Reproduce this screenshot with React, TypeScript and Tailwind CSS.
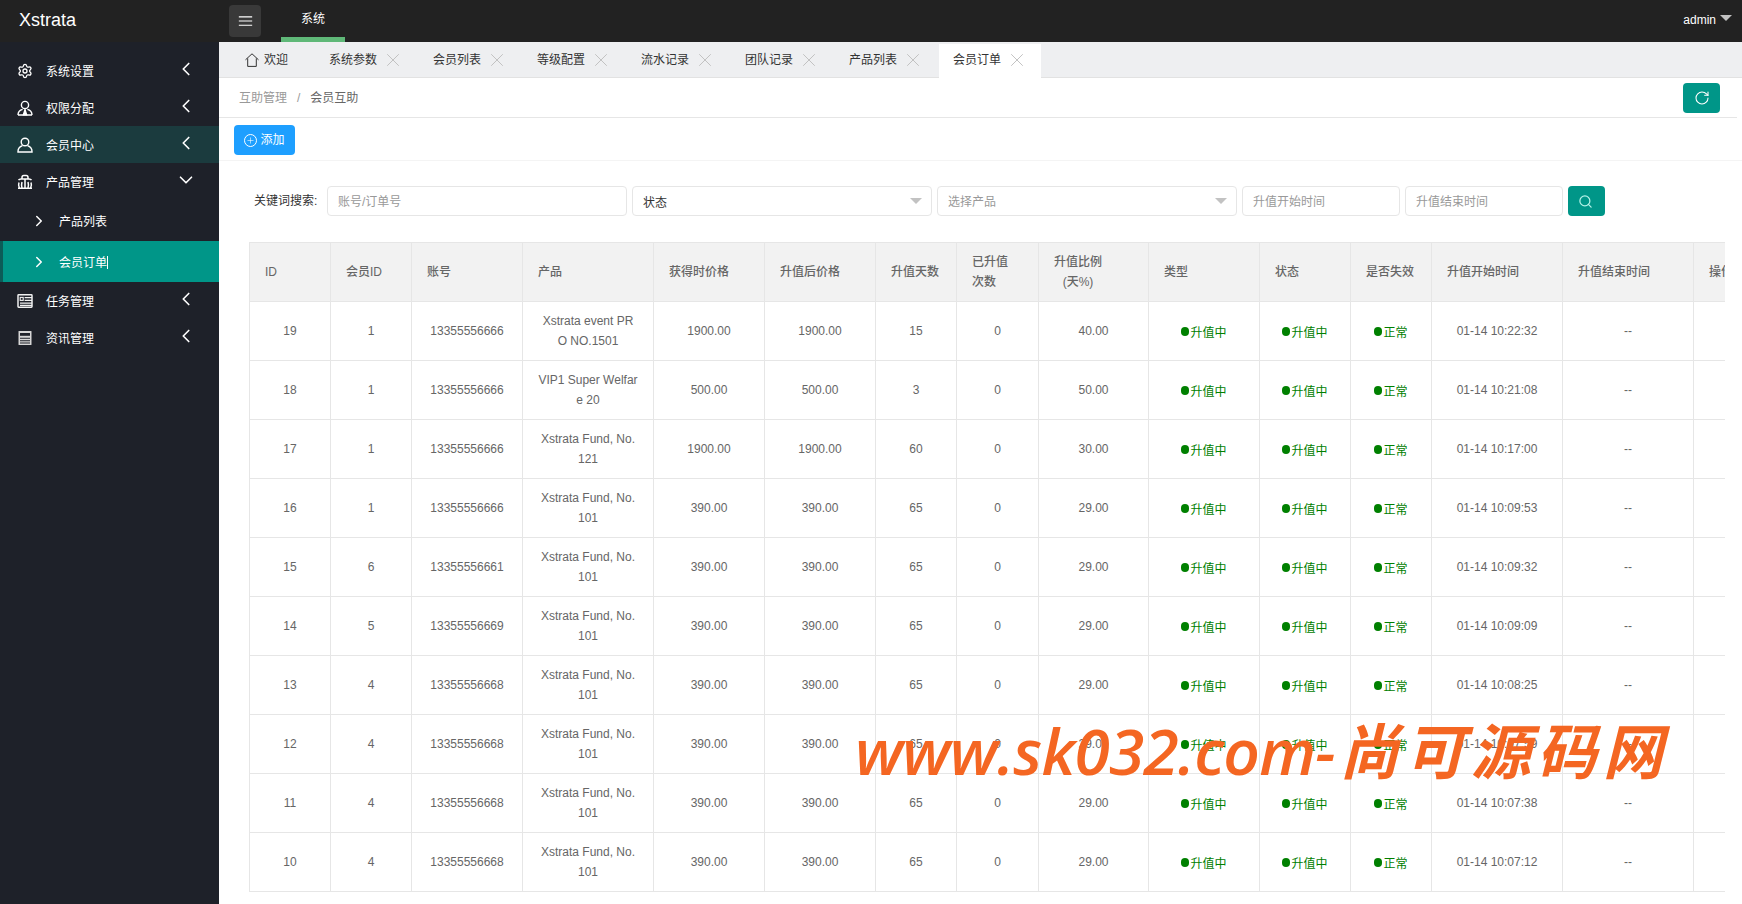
import { ChevronDown, ChevronLeft, ChevronRight, Plus, RotateCw, Search, Settings, X } from "lucide-react";

const font = "font-['Liberation_Sans','Noto_Sans_CJK_SC',sans-serif]";

function IconRole() {
  return (
    <svg viewBox="0 0 16 16" className="size-4" fill="none" stroke="currentColor" strokeWidth="1.4">
      <circle cx="8" cy="5" r="3.6" />
      <path d="M1 15c0-3.6 2.2-5 4.6-5.6M15 15c0-3.6-2.2-5-4.6-5.6M1 15h14" />
      <path d="M8 9.6l-1.6 5.2h3.2z" fill="currentColor" />
    </svg>
  );
}

function IconUser() {
  return (
    <svg viewBox="0 0 16 16" className="size-4" fill="none" stroke="currentColor" strokeWidth="1.4">
      <circle cx="8" cy="5" r="3.8" />
      <path d="M5.4 8.6C2.8 9.6 1 11.6 1 14.4v.6h14v-.6c0-2.8-1.8-4.8-4.4-5.8" />
    </svg>
  );
}

function IconProduct() {
  return (
    <svg viewBox="0 0 16 16" className="size-4" fill="none" stroke="currentColor" strokeWidth="1.5">
      <path d="M5 5V3.4C5 2.4 5.8 1.6 6.8 1.6h2.4c1 0 1.8.8 1.8 1.8V5" />
      <path d="M1.5 6.2C2 5.4 3 5 4 5h8c1 0 2 .4 2.5 1.2" />
      <path d="M8 5v9M2 8.5c-.6 1.5-.6 3.5.4 5.5M14 8.5c.6 1.5.6 3.5-.4 5.5M5 8c-.6 2-.6 4 0 6M11 8c.6 2 .6 4 0 6M1 14.2h14" />
    </svg>
  );
}

function IconTask() {
  return (
    <svg viewBox="0 0 16 16" className="size-4" fill="none" stroke="#f0f0f0" strokeWidth="1.5">
      <rect x="1" y="1.8" width="14" height="12.4" rx="0.6" />
      <rect x="3.2" y="4.4" width="3" height="3" strokeWidth="1.1" />
      <path d="M7.6 4.7H15M7.6 7.4H15M3 10.2h12M3 12.3h12" strokeWidth="1.3" />
    </svg>
  );
}

function IconNews() {
  return (
    <svg viewBox="0 0 16 16" className="size-4" fill="none">
      <rect x="1.5" y="1" width="13" height="14" rx="0.6" fill="#d6d6d6" />
      <rect x="3" y="3" width="10" height="2.8" fill="#1e2129" />
      <path d="M3 8.3h10M3 10.7h10" stroke="#1e2129" strokeWidth="1.1" />
      <path d="M3 13h10" stroke="#1e2129" strokeWidth="1" />
    </svg>
  );
}

function IconHome() {
  return (
    <svg viewBox="0 0 14 14" className="size-[14px]" fill="none" stroke="currentColor" strokeWidth="1">
      <path d="M0.5 6.8L7 0.8l6.5 6M2.7 5.4v8h8.6v-8" />
    </svg>
  );
}

const tabs = ["系统参数", "会员列表", "等级配置", "流水记录", "团队记录", "产品列表"];

const widths = ["w-[81px]", "w-[81px]", "w-[111px]", "w-[131px]", "w-[111px]", "w-[111px]", "w-[81px]", "w-[82px]", "w-[110px]", "w-[111px]", "w-[91px]", "w-[81px]", "w-[131px]", "w-[131px]", "w-[80px]"];

const fund101 = ["Xstrata Fund, No.", "101"];

const rows = [
  { id: 19, uid: 1, phone: "13355556666", name: ["Xstrata event PR", "O NO.1501"], price: "1900.00", after: "1900.00", days: 15, rate: "40.00", time: "01-14 10:22:32" },
  { id: 18, uid: 1, phone: "13355556666", name: ["VIP1 Super Welfar", "e 20"], price: "500.00", after: "500.00", days: 3, rate: "50.00", time: "01-14 10:21:08" },
  { id: 17, uid: 1, phone: "13355556666", name: ["Xstrata Fund, No.", "121"], price: "1900.00", after: "1900.00", days: 60, rate: "30.00", time: "01-14 10:17:00" },
  { id: 16, uid: 1, phone: "13355556666", name: fund101, price: "390.00", after: "390.00", days: 65, rate: "29.00", time: "01-14 10:09:53" },
  { id: 15, uid: 6, phone: "13355556661", name: fund101, price: "390.00", after: "390.00", days: 65, rate: "29.00", time: "01-14 10:09:32" },
  { id: 14, uid: 5, phone: "13355556669", name: fund101, price: "390.00", after: "390.00", days: 65, rate: "29.00", time: "01-14 10:09:09" },
  { id: 13, uid: 4, phone: "13355556668", name: fund101, price: "390.00", after: "390.00", days: 65, rate: "29.00", time: "01-14 10:08:25" },
  { id: 12, uid: 4, phone: "13355556668", name: fund101, price: "390.00", after: "390.00", days: 65, rate: "29.00", time: "01-14 10:07:59" },
  { id: 11, uid: 4, phone: "13355556668", name: fund101, price: "390.00", after: "390.00", days: 65, rate: "29.00", time: "01-14 10:07:38" },
  { id: 10, uid: 4, phone: "13355556668", name: fund101, price: "390.00", after: "390.00", days: 65, rate: "29.00", time: "01-14 10:07:12" },
];

function MenuItem({ icon, label, open, active }: { icon: React.ReactNode; label: string; open?: boolean; active?: boolean }) {
  return (
    <div className={`flex h-[37px] items-center pl-[17px] pr-[22px] text-white ${active ? "bg-[#1b3b3e]" : ""}`}>
      <span className="w-[29px] shrink-0">{icon}</span>
      <span className="flex-1 pt-[3px]">{label}</span>
      {open ? <ChevronDown className="-mt-[3px] size-[22px]" strokeWidth={1.8} /> : <ChevronLeft className="-mt-[3px] size-[22px]" strokeWidth={1.8} />}
    </div>
  );
}

function Status({ text }: { text: string }) {
  return (
    <span className="inline-flex items-center gap-px text-[#008000]">
      <span className="h-[9px] w-2 rounded-full bg-[#008000]" />
      <span className="pt-[3px]">{text}</span>
    </span>
  );
}

function Th({ children }: { children: React.ReactNode }) {
  return <th className="border border-[#e6e6e6] px-[15px] text-left font-medium leading-5 text-[#666]">{children}</th>;
}

function Td({ children }: { children: React.ReactNode }) {
  return <td className="border border-[#e6e6e6] px-[15px] text-center leading-5 text-[#666]">{children}</td>;
}

function Field({ placeholder, width }: { placeholder: string; width: string }) {
  return <div className={`flex h-[30px] items-center rounded-sm border border-[#e6e6e6] pl-[10px] pt-[1px] text-[#999] ${width}`}>{placeholder}</div>;
}

function Select({ label, width, dark }: { label: string; width: string; dark?: boolean }) {
  return (
    <div className={`flex h-[30px] items-center justify-between rounded-sm border border-[#e6e6e6] pl-[10px] pr-[9px] ${width} ${dark ? "text-[#333]" : "text-[#999]"}`}>
      <span className={dark ? "pt-[3px]" : "pt-[1px]"}>{label}</span>
      <span className="border-x-[6px] border-t-[6px] border-x-transparent border-t-[#c2c2c2]" />
    </div>
  );
}

export default function App() {
  return (
    <div className={`relative flex h-screen flex-col overflow-hidden bg-white text-xs ${font}`}>
      <header className="flex h-[42px] shrink-0 items-center bg-[#222222] text-white">
        <div className="-mt-[3px] w-[229px] pl-[19px] text-lg">Xstrata</div>
        <div className="flex size-8 items-center justify-center rounded-sm bg-[#393939]">
          <svg viewBox="0 0 16 12" className="h-[10px] w-[15px]" stroke="currentColor" strokeWidth="1.3">
            <path d="M0 1h16M0 6h16M0 11h16" />
          </svg>
        </div>
        <div className="ml-5 flex h-full w-16 items-center justify-center border-b-[5px] border-[#5fb878] pt-[1px]">系统</div>
        <div className="-mt-[2px] ml-auto flex items-center gap-1 pr-[10px]">
          <span>admin</span>
          <span className="-mt-1 border-x-[6px] border-t-[6px] border-x-transparent border-t-[#c2c2c2]" />
        </div>
      </header>
      <div className="flex min-h-0 flex-1">
        <aside className="w-[219px] shrink-0 bg-[#1e2129] pt-[10px]">
          <MenuItem icon={<Settings className="size-4" strokeWidth={2} />} label="系统设置" />
          <MenuItem icon={<IconRole />} label="权限分配" />
          <MenuItem icon={<IconUser />} label="会员中心" active />
          <MenuItem icon={<IconProduct />} label="产品管理" open />
          <div className="flex h-[41px] items-center pl-[30px] text-white">
            <ChevronRight className="size-[18px]" strokeWidth={2} />
            <span className="ml-[11px] pt-[2px]">产品列表</span>
          </div>
          <div className="flex h-[41px] items-center border-l-[3px] border-[#0c5c58] bg-[#009688] pl-[27px] text-white">
            <ChevronRight className="size-[18px]" strokeWidth={2} />
            <span className="ml-[11px] pt-[2px]">会员订单</span>
            <span className="mt-[1px] h-[13px] w-px bg-white" />
          </div>
          <MenuItem icon={<IconTask />} label="任务管理" />
          <MenuItem icon={<IconNews />} label="资讯管理" />
        </aside>
        <main className="min-w-0 flex-1">
          <div className="flex h-[36px] border-b border-[#e2e2e2] bg-[#eeeff1] text-[#333]">
            <div className="flex w-[96px] items-center pl-[26px]">
              <IconHome />
              <span className="ml-[5px]">欢迎</span>
            </div>
            {tabs.map((tab) => (
              <div key={tab} className="flex w-[104px] items-center pl-[14px]">
                <span>{tab}</span>
                <X className="ml-[5px] size-[22px] text-[#bdbdbd]" strokeWidth={1} />
              </div>
            ))}
            <div className="mt-[2px] flex h-[35px] w-[102px] items-center bg-white pb-[3px] pl-[14px]">
              <span>会员订单</span>
              <X className="ml-[5px] size-[22px] text-[#bdbdbd]" strokeWidth={1} />
            </div>
          </div>
          <div className="mr-[5px] flex h-[40px] items-center justify-between border-b border-[#e6e6e6] pl-5 pr-[17px]">
            <div className="flex items-center">
              <span className="text-[#999]">互助管理</span>
              <span className="mx-[10px] text-[#999]">/</span>
              <span className="text-[#666]">会员互助</span>
            </div>
            <div className="flex h-[30px] w-[37px] items-center justify-center rounded-sm bg-[#009688] text-white">
              <RotateCw className="size-4" strokeWidth={1.6} />
            </div>
          </div>
          <div className="flex h-[43px] items-start border-b border-[#f4f4f4] pl-[15px] pt-[7px]">
            <div className="flex h-[30px] w-[61px] items-center justify-center gap-[3px] rounded-sm bg-[#1e9fff] text-white">
              <span className="flex size-[13px] items-center justify-center rounded-full border border-white">
                <Plus className="size-[9px]" strokeWidth={1.5} />
              </span>
              <span>添加</span>
            </div>
          </div>
          <div className="flex items-center gap-[5px] pl-[35px] pt-[25px]">
            <span className="w-[68px] whitespace-nowrap text-[#333]">关键词搜索:</span>
            <Field placeholder="账号/订单号" width="w-[300px]" />
            <Select label="状态" width="w-[300px]" dark />
            <Select label="选择产品" width="w-[300px]" />
            <Field placeholder="升值开始时间" width="w-[158px]" />
            <Field placeholder="升值结束时间" width="w-[158px]" />
            <div className="flex h-[30px] w-[37px] items-center justify-center rounded-sm bg-[#009688] text-[#b5f2e8]">
              <Search className="-ml-[2px] size-[15px]" strokeWidth={2} />
            </div>
          </div>
          <div className="ml-[30px] mt-[26px] w-[1476px] overflow-hidden">
            <table className="w-[1524px] table-fixed border-collapse">
              <colgroup>
                {widths.map((w, i) => (
                  <col key={i} className={w} />
                ))}
              </colgroup>
              <thead className="bg-[#f2f2f2]">
                <tr className="h-[59px]">
                  <Th>ID</Th>
                  <Th>会员ID</Th>
                  <Th>账号</Th>
                  <Th>产品</Th>
                  <Th>获得时价格</Th>
                  <Th>升值后价格</Th>
                  <Th>升值天数</Th>
                  <Th>
                    已升值
                    <br />
                    次数
                  </Th>
                  <Th>
                    <span className="inline-block text-center">
                      升值比例
                      <br />
                      (天%)
                    </span>
                  </Th>
                  <Th>类型</Th>
                  <Th>状态</Th>
                  <Th>是否失效</Th>
                  <Th>升值开始时间</Th>
                  <Th>升值结束时间</Th>
                  <Th>操作</Th>
                </tr>
              </thead>
              <tbody>
                {rows.map((row) => (
                  <tr key={row.id} className="h-[59px]">
                    <Td>{row.id}</Td>
                    <Td>{row.uid}</Td>
                    <Td>{row.phone}</Td>
                    <Td>
                      {row.name[0]}
                      <br />
                      {row.name[1]}
                    </Td>
                    <Td>{row.price}</Td>
                    <Td>{row.after}</Td>
                    <Td>{row.days}</Td>
                    <Td>0</Td>
                    <Td>{row.rate}</Td>
                    <Td>
                      <Status text="升值中" />
                    </Td>
                    <Td>
                      <Status text="升值中" />
                    </Td>
                    <Td>
                      <Status text="正常" />
                    </Td>
                    <Td>{row.time}</Td>
                    <Td>--</Td>
                    <Td />
                  </tr>
                ))}
              </tbody>
            </table>
          </div>
        </main>
      </div>
      <div className="absolute left-[855px] top-[711px] flex items-center whitespace-nowrap font-['Open_Sans','Noto_Sans_CJK_SC',sans-serif] text-[64px] font-semibold italic leading-[80px] tracking-[-0.8px] text-[#f46622]">
        <span>www.sk032.com-</span>
        <span className="ml-[4px] text-[60px] tracking-[6px]">尚可源码网</span>
      </div>
    </div>
  );
}
